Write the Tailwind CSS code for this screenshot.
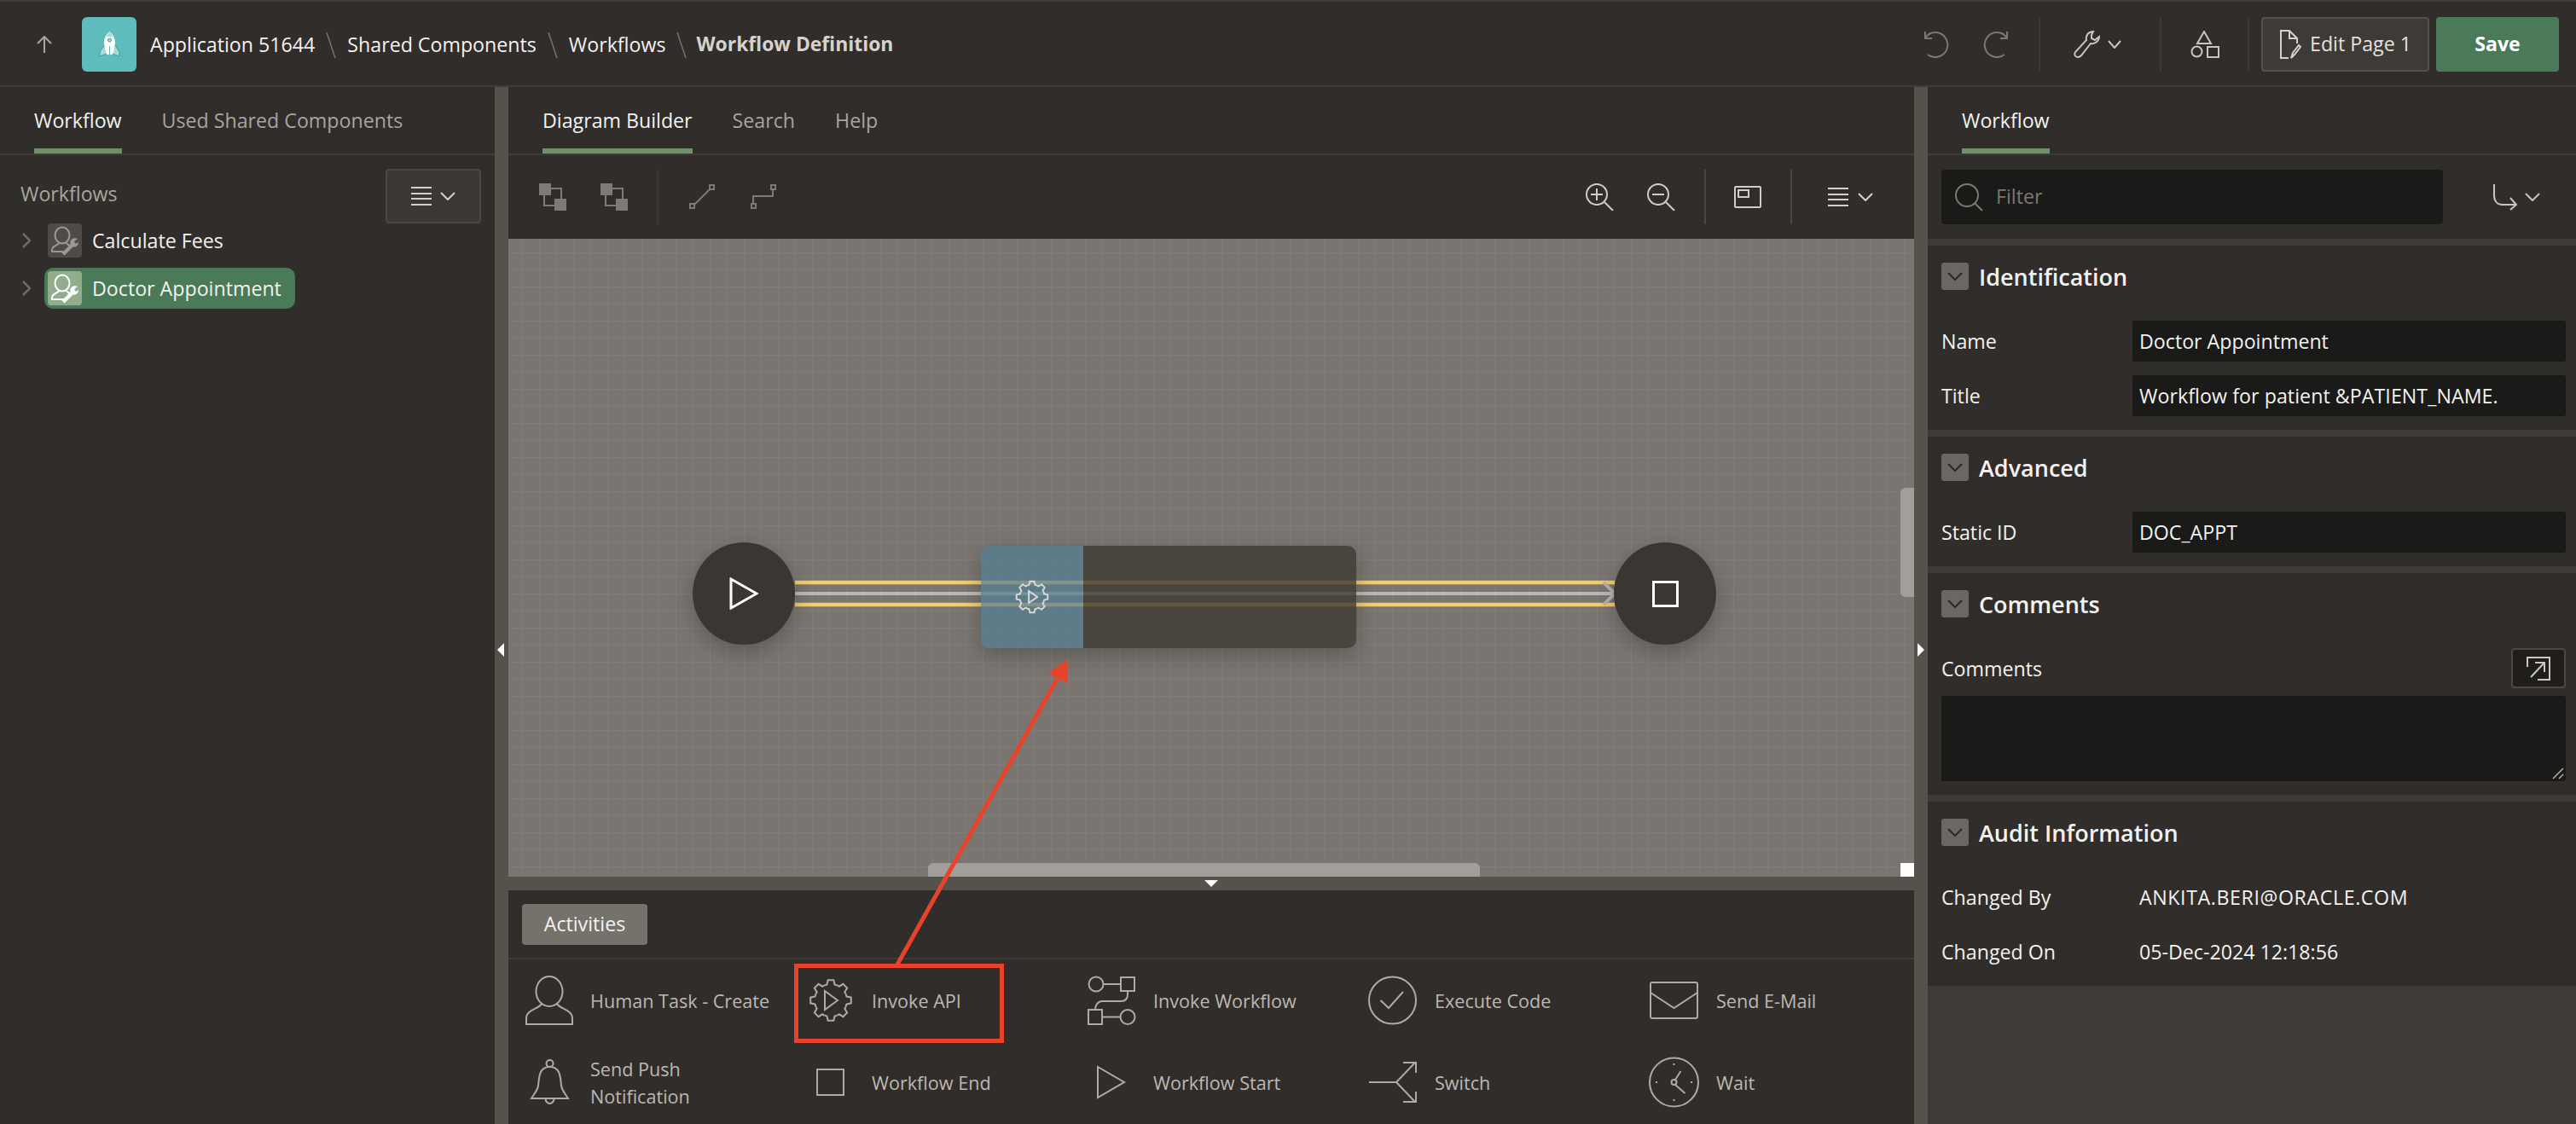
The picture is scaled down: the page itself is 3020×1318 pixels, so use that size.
<!DOCTYPE html>
<html lang="en">
<head>
  <meta charset="UTF-8" />
  <meta name="viewport" content="width=device-width, initial-scale=1" />
  <title>Workflow Definition</title>
  <script src="https://cdn.jsdelivr.net/npm/@tailwindcss/browser@4"></script>
</head>
<body class="relative w-[3020px] h-[1318px] overflow-hidden bg-[#312d2a] text-[#f3f2f0] text-[23.2px] leading-none [font-family:'Open_Sans',sans-serif]">

  <!-- top bar -->
  <header class="h-[102px] pt-[2px] border-t-2 border-b-2 border-[#3f3c38] flex items-center pl-[42px] pr-[20px] box-border">
    <svg class="w-[20px] h-[20px] text-[#a9a5a0]" viewBox="0 0 20 20" fill="none" stroke="currentColor" stroke-width="2"><path d="M10 20V1M2 9l8-8 8 8"/></svg>
    <div class="ml-[34px] w-[64px] h-[64px] rounded-[6px] bg-[#5fbcbd] flex items-center justify-center">
      <svg class="w-[25px] h-[32px]" viewBox="0 0 25 32"><path d="M6 17L1 25V30L9 27ZM19 17L24 25V30L16 27Z" fill="#a6dcd8" stroke="#3f9a9a" stroke-width="1"/><path d="M12.500 1C8 5 6 9 6 14C6 20 8 25 9 28H16C17 25 19 20 19 14C19 9 17 5 12.500 1Z" fill="#fff"/><path d="M12.500 1L8.500 7H16.500Z" fill="#a6dcd8"/><circle cx="12.500" cy="11" r="2" fill="#a6dcd8" stroke="#3f9a9a" stroke-width="1"/><path d="M12.500 18V31" stroke="#5fbcbd" stroke-width="1"/></svg>
    </div>
    <nav class="ml-[16px] pt-[1px] flex items-center gap-[13px]">
      <span>Application 51644</span>
      <svg class="w-[12px] h-[30px]" viewBox="0 0 12 30" fill="none" stroke="#77736e" stroke-width="1.500"><path d="M1 0l10 30"/></svg>
      <span>Shared Components</span>
      <svg class="w-[12px] h-[30px]" viewBox="0 0 12 30" fill="none" stroke="#77736e" stroke-width="1.500"><path d="M1 0l10 30"/></svg>
      <span>Workflows</span>
      <svg class="w-[12px] h-[30px]" viewBox="0 0 12 30" fill="none" stroke="#77736e" stroke-width="1.500"><path d="M1 0l10 30"/></svg>
      <span class="-ml-[2px] text-[22.9px] font-bold text-[#d6d3cf]">Workflow Definition</span>
    </nav>
    <div class="ml-auto flex items-center h-[64px]">
      <svg class="w-[32px] h-[32px]" viewBox="0 0 32 32" fill="none" stroke="#7c7873" stroke-width="2"><path d="M3 1v8h8M3 9C6 4 10 2 14 2a14.500 14.500 0 1 1-8 26"/></svg>
      <svg class="ml-[38px] w-[32px] h-[32px]" viewBox="0 0 32 32" fill="none" stroke="#7c7873" stroke-width="2"><path d="M29 1v8h-8M29 9C26 4 22 2 18 2a14.500 14.500 0 1 0 8 26"/></svg>
      <div class="ml-[34px] w-[2px] h-[64px] bg-[#3c3935]"></div>
      <svg class="ml-[38px] w-[32px] h-[32px]" viewBox="0 0 32 32" fill="none" stroke="#c9c6c1" stroke-width="2"><path d="M24 1c-6 0-9 5-8 10L3 25c-2 3 0 6 3 6 2 0 3-1 4-2l11-14c5 1 10-3 10-8l-5 4-4-2V5z"/></svg>
      <svg class="ml-[9px] w-[16px] h-[10px]" viewBox="0 0 16 10" fill="none" stroke="#c9c6c1" stroke-width="2"><path d="M1 1l7 8 7-8"/></svg>
      <div class="ml-[45px] w-[2px] h-[64px] bg-[#3c3935]"></div>
      <svg class="ml-[34px] w-[34px] h-[32px]" viewBox="0 0 34 32" fill="none" stroke="#c9c6c1" stroke-width="2"><path d="M16 1l8 14H8z"/><circle cx="7.500" cy="24.500" r="6"/><path d="M20 19h13v12H20z"/></svg>
      <div class="ml-[33px] w-[2px] h-[64px] bg-[#3c3935]"></div>
      <button class="ml-[14px] w-[197px] h-[64px] rounded-[4px] border-2 border-[#55514c] bg-[#3e3b37] flex items-center pl-[19px] text-[#e4e2de]">
        <svg class="w-[26px] h-[34px]" viewBox="0 0 26 34" fill="none" stroke="#d4d1cc" stroke-width="2"><path d="M11 33H2V1h10l9 9v6M12 1v9h9M14 33l2-6 7-9 2 2-7 9z"/></svg>
        <span class="ml-[10px]">Edit Page 1</span>
      </button>
      <button class="ml-[8px] w-[144px] h-[64px] rounded-[4px] bg-[#4a7a57] font-bold text-white">Save</button>
    </div>
  </header>

  <main class="flex h-[1216px]">
    <!-- left panel -->
    <section class="w-[580px]">
      <div class="h-[80px] border-b-2 border-[#3f3c38] flex gap-[47px] px-[40px]">
        <div class="h-[78px] pt-[7px] border-b-[6px] border-[#6f9068] flex items-center">Workflow</div>
        <div class="h-[78px] pt-[7px] border-b-[6px] border-transparent flex items-center text-[#a8a4a0]">Used Shared Components</div>
      </div>
      <div class="pt-[16px] pl-[24px] pr-[16px] h-[80px] flex justify-between">
        <span class="mt-[18px] text-[#a9a59f]">Workflows</span>
        <button class="w-[112px] h-[64px] rounded-[4px] border-2 border-[#4b4843] bg-[#3b3834] flex items-center justify-center gap-[10px]">
          <svg class="w-[24px] h-[22px]" viewBox="0 0 24 22" fill="none" stroke="#d4d1cc" stroke-width="2"><path d="M0 1h24M0 8h24M0 14h24M0 21h24"/></svg>
          <svg class="w-[18px] h-[10px]" viewBox="0 0 18 10" fill="none" stroke="#d4d1cc" stroke-width="2"><path d="M1 1l8 8 8-8"/></svg>
        </button>
      </div>
      <div class="-mt-[8px]">
        <div class="h-[56px] flex items-center pl-[26px]">
          <svg class="w-[10px] h-[18px]" viewBox="0 0 10 18" fill="none" stroke="#6f6b66" stroke-width="2.500"><path d="M1 1l8 8-8 8"/></svg>
          <div class="ml-[16px] h-[48px] pl-[4px] pr-[16px] flex items-center rounded-[10px]">
            <div class="w-[40px] h-[40px] rounded-[4px] bg-[#4f4c48]">
              <svg class="w-[40px] h-[40px]" viewBox="0 0 40 40" fill="none" stroke="#9b9792" stroke-width="2"><ellipse cx="17" cy="14" rx="8.500" ry="9.500"/><path d="M13 23C12 26 5 26 5 31V33H20M22 23C23 25 26 26 27 26"/><path d="M18 36L29 25" stroke-width="4.500"/><path d="M26 22C27 18 31 16 35 18L31 21L33 24L36 22C36 26 32 29 28 27Z" fill="#9b9792" stroke="none"/></svg>
            </div>
            <span class="ml-[12px] pt-[1px]">Calculate Fees</span>
          </div>
        </div>
        <div class="h-[56px] flex items-center pl-[26px]">
          <svg class="w-[10px] h-[18px]" viewBox="0 0 10 18" fill="none" stroke="#6f6b66" stroke-width="2.500"><path d="M1 1l8 8-8 8"/></svg>
          <div class="ml-[16px] h-[48px] pl-[4px] pr-[16px] flex items-center rounded-[10px] bg-[#4a7a57]">
            <div class="w-[40px] h-[40px] rounded-[4px] bg-[#92ad8c]">
              <svg class="w-[40px] h-[40px]" viewBox="0 0 40 40" fill="none" stroke="#fff" stroke-width="2"><ellipse cx="17" cy="14" rx="8.500" ry="9.500"/><path d="M13 23C12 26 5 26 5 31V33H20M22 23C23 25 26 26 27 26"/><path d="M18 36L29 25" stroke-width="4.500"/><path d="M26 22C27 18 31 16 35 18L31 21L33 24L36 22C36 26 32 29 28 27Z" fill="#fff" stroke="none"/></svg>
            </div>
            <span class="ml-[12px] pt-[1px]">Doctor Appointment</span>
          </div>
        </div>
      </div>
    </section>

    <!-- left splitter -->
    <div class="relative w-[16px] bg-[#55514b]">
      <svg class="absolute left-[3px] top-[652px] w-[8px] h-[16px]" viewBox="0 0 8 16"><path d="M8 0v16L0 8z" fill="#fff"/></svg>
    </div>

    <!-- center -->
    <section class="w-[1648px] flex flex-col">
      <div class="h-[80px] border-b-2 border-[#3f3c38] flex gap-[47px] px-[40px]">
        <div class="h-[78px] pt-[7px] border-b-[6px] border-[#6f9068] flex items-center">Diagram Builder</div>
        <div class="h-[78px] pt-[7px] border-b-[6px] border-transparent flex items-center text-[#a8a4a0]">Search</div>
        <div class="h-[78px] pt-[7px] border-b-[6px] border-transparent flex items-center text-[#a8a4a0]">Help</div>
      </div>
      <div class="h-[98px] flex items-center pl-[36px]">
        <svg class="w-[32px] h-[32px]" viewBox="0 0 32 32"><path d="M6 6h20v20H6z" fill="none" stroke="#7e7a75" stroke-width="2"/><path d="M0 0h14v14H0zM18 18h14v14H18z" fill="#7e7a75"/></svg>
        <svg class="ml-[40px] w-[32px] h-[32px]" viewBox="0 0 32 32"><path d="M14 6h12v12M18 26H6V14" fill="none" stroke="#7e7a75" stroke-width="2"/><path d="M0 0h14v14H0zM18 18h14v14H18z" fill="#7e7a75"/></svg>
        <div class="ml-[34px] w-[2px] h-[64px] bg-[#3c3935]"></div>
        <svg class="ml-[36px] w-[30px] h-[30px]" viewBox="0 0 30 30" fill="none" stroke="#7e7a75" stroke-width="2"><path d="M6 24L24 6"/><rect x="1" y="23" width="5" height="5"/><rect x="24" y="1" width="5" height="5"/></svg>
        <svg class="ml-[42px] w-[30px] h-[30px]" viewBox="0 0 30 30" fill="none" stroke="#7e7a75" stroke-width="2"><path d="M3 23V14H26V6"/><rect x="1" y="23" width="5" height="5"/><rect x="24" y="1" width="5" height="5"/></svg>
        <svg class="ml-[949px] w-[33px] h-[32px]" viewBox="0 0 33 32" fill="none" stroke="#d0cdc8" stroke-width="2"><circle cx="13" cy="13" r="12"/><path d="M22 22l10 10M13 6v14M6 13h14"/></svg>
        <svg class="ml-[39px] w-[33px] h-[32px]" viewBox="0 0 33 32" fill="none" stroke="#d0cdc8" stroke-width="2"><circle cx="13" cy="13" r="12"/><path d="M22 22l10 10M6 13h14"/></svg>
        <div class="ml-[34px] w-[2px] h-[64px] bg-[#4a4742]"></div>
        <svg class="ml-[33px] w-[32px] h-[26px]" viewBox="0 0 32 26" fill="none" stroke="#d0cdc8" stroke-width="2"><rect x="1" y="1" width="30" height="24" rx="1"/><rect x="5" y="5" width="12" height="8"/></svg>
        <div class="ml-[34px] w-[2px] h-[64px] bg-[#4a4742]"></div>
        <svg class="ml-[42px] w-[24px] h-[22px]" viewBox="0 0 24 22" fill="none" stroke="#d4d1cc" stroke-width="2"><path d="M0 1h24M0 8h24M0 14h24M0 21h24"/></svg>
        <svg class="ml-[11px] w-[18px] h-[10px]" viewBox="0 0 18 10" fill="none" stroke="#d4d1cc" stroke-width="2"><path d="M1 1l8 8 8-8"/></svg>
      </div>

      <!-- diagram canvas -->
      <div class="relative h-[748px] overflow-hidden bg-[#7a7570] bg-[image:linear-gradient(#817c77_1px,transparent_1px),linear-gradient(90deg,#817c77_1px,transparent_1px)] bg-[size:20px_20px] bg-[position:16px_16px]">
        <svg class="absolute inset-0 w-[1648px] h-[748px]" viewBox="0 0 1648 748" fill="none">
          <path d="M336 403H1297M336 429H1297" stroke="#f3cd6f" stroke-width="4.500"/>
          <path d="M336 416H1297" stroke="#bdb9b3" stroke-width="4"/>
          <path d="M1284 403l13 13-13 13" stroke="#b5b1ab" stroke-width="4"/>
        </svg>
        <div class="absolute left-[216px] top-[356px] w-[120px] h-[120px] rounded-full bg-[#3a3632] shadow-[0_8px_24px_rgba(0,0,0,0.25)] flex items-center justify-center">
          <svg class="w-[34px] h-[38px]" viewBox="0 0 34 38" fill="none" stroke="#fff" stroke-width="3"><path d="M2 2l30 17L2 36z"/></svg>
        </div>
        <div class="absolute left-[554px] top-[360px] w-[440px] h-[120px] rounded-[10px] overflow-hidden flex shadow-[0_8px_24px_rgba(0,0,0,0.25)]">
          <div class="w-[120px] bg-[#537d96]/70 flex items-center justify-center">
            <svg class="w-[40px] h-[40px]" viewBox="-26 -26 52 52" fill="none" stroke="#dcdad6" stroke-width="2.500">
              <path id="t" d="M-7.270-17.550A19 19 0 0 1-4.600-18.440L-3.340-23.770L3.340-23.770L4.600-18.440A19 19 0 0 1 7.270-17.550"/>
              <use href="#t" transform="rotate(45)"/><use href="#t" transform="rotate(90)"/><use href="#t" transform="rotate(135)"/><use href="#t" transform="rotate(180)"/><use href="#t" transform="rotate(225)"/><use href="#t" transform="rotate(270)"/><use href="#t" transform="rotate(315)"/>
              <path d="M-5-9L8 0L-5 9z"/>
            </svg>
          </div>
          <div class="flex-1 bg-[#3c3933]/80"></div>
        </div>
        <div class="absolute left-[1296px] top-[356px] w-[120px] h-[120px] rounded-full bg-[#3a3632] shadow-[0_8px_24px_rgba(0,0,0,0.25)] flex items-center justify-center">
          <div class="w-[31px] h-[31px] border-[3px] border-white"></div>
        </div>
        <div class="absolute left-[1632px] top-[292px] w-[16px] h-[128px] rounded-l-[6px] bg-[#a29e99]"></div>
        <div class="absolute left-[492px] top-[732px] w-[647px] h-[16px] rounded-t-[6px] bg-[#a29e99]"></div>
        <div class="absolute right-0 bottom-0 w-[16px] h-[16px] bg-white"></div>
      </div>

      <div class="relative h-[16px] bg-[#55514b]">
        <svg class="absolute left-[816px] top-[4px] w-[16px] h-[8px]" viewBox="0 0 16 8"><path d="M0 0h16L8 8z" fill="#fff"/></svg>
      </div>

      <!-- activities palette -->
      <div class="flex-1 text-[#bcb8b2] text-[21.6px]">
        <div class="h-[81px] border-b-2 border-[#3f3c38] pl-[16px] pt-[16px]">
          <div class="w-[147px] h-[48px] rounded-[4px] bg-[#75716b] text-[#f3f2f0] text-[23.2px] flex items-center justify-center">Activities</div>
        </div>
        <div class="ml-[10px] grid grid-cols-[repeat(5,330px)] auto-rows-[96px]">
          <div class="flex items-center pl-[6px] gap-[16px]">
            <svg class="w-[64px] h-[64px]" viewBox="0 0 64 64" fill="none" stroke="#aeaaa4" stroke-width="2"><ellipse cx="32" cy="21.500" rx="15.500" ry="17.500"/><path d="M23 36C20 42 5 43 5 53V60H59V53C59 43 44 42 41 36"/></svg>
            <span class="pt-[1px]">Human Task - Create</span>
          </div>
          <div class="flex items-center pl-[6px] gap-[16px]">
            <svg class="w-[64px] h-[64px]" viewBox="-32 -32 64 64" fill="none" stroke="#aeaaa4" stroke-width="2">
              <use href="#t"/><use href="#t" transform="rotate(45)"/><use href="#t" transform="rotate(90)"/><use href="#t" transform="rotate(135)"/><use href="#t" transform="rotate(180)"/><use href="#t" transform="rotate(225)"/><use href="#t" transform="rotate(270)"/><use href="#t" transform="rotate(315)"/>
              <path d="M-7-11L8 0L-7 11z"/>
            </svg>
            <span class="pt-[1px]">Invoke API</span>
          </div>
          <div class="flex items-center pl-[6px] gap-[16px]">
            <svg class="w-[64px] h-[64px]" viewBox="0 0 64 64" fill="none" stroke="#aeaaa4" stroke-width="2"><circle cx="13" cy="13" r="8.500"/><path d="M22 13H42"/><rect x="42" y="5" width="16" height="16"/><path d="M50 21V25C50 30 47 33 42 33H20C15 33 12 38 12 43"/><rect x="4" y="43" width="16" height="17"/><path d="M20 51.500H41"/><circle cx="50" cy="51.500" r="8.500"/></svg>
            <span class="pt-[1px]">Invoke Workflow</span>
          </div>
          <div class="flex items-center pl-[6px] gap-[16px]">
            <svg class="w-[64px] h-[64px]" viewBox="0 0 64 64" fill="none" stroke="#aeaaa4" stroke-width="2"><circle cx="30.500" cy="32" r="27.500"/><path d="M16.500 32L26 41L43 22"/></svg>
            <span class="pt-[1px]">Execute Code</span>
          </div>
          <div class="flex items-center pl-[6px] gap-[16px]">
            <svg class="w-[64px] h-[64px]" viewBox="0 0 64 64" fill="none" stroke="#aeaaa4" stroke-width="2"><rect x="3" y="11" width="55" height="42" rx="2"/><path d="M3 23L30.500 41L58 23"/></svg>
            <span class="pt-[1px]">Send E-Mail</span>
          </div>

          <div class="flex items-center pl-[6px] gap-[16px]">
            <svg class="w-[64px] h-[64px]" viewBox="0 0 64 64" fill="none" stroke="#aeaaa4" stroke-width="2"><circle cx="32.500" cy="10" r="4"/><path d="M32.500 14C20 14 20 26 19 36C18 42 14 46 11 51H54C51 46 47 42 46 36C45 26 45 14 32.500 14Z"/><path d="M27.500 51a5 6 0 0 0 10 0"/></svg>
            <span class="leading-[32px] pt-[1px]">Send Push<br>Notification</span>
          </div>
          <div class="flex items-center pl-[6px] gap-[16px]">
            <svg class="w-[64px] h-[64px]" viewBox="0 0 64 64" fill="none" stroke="#aeaaa4" stroke-width="2"><rect x="16" y="17" width="31" height="30"/></svg>
            <span class="pt-[1px]">Workflow End</span>
          </div>
          <div class="flex items-center pl-[6px] gap-[16px]">
            <svg class="w-[64px] h-[64px]" viewBox="0 0 64 64" fill="none" stroke="#aeaaa4" stroke-width="2"><path d="M15 14L46 32L15 50Z"/></svg>
            <span class="pt-[1px]">Workflow Start</span>
          </div>
          <div class="flex items-center pl-[6px] gap-[16px]">
            <svg class="w-[64px] h-[64px]" viewBox="0 0 64 64" fill="none" stroke="#aeaaa4" stroke-width="2"><path d="M3 32H35L57 9M43 9H58V21M35 32L57 55M43 55H58V43"/></svg>
            <span class="pt-[1px]">Switch</span>
          </div>
          <div class="flex items-center pl-[6px] gap-[16px]">
            <svg class="w-[64px] h-[64px]" viewBox="0 0 64 64" fill="none" stroke="#aeaaa4" stroke-width="2"><circle cx="30.500" cy="32" r="28.500"/><circle cx="30.500" cy="32" r="3"/><path d="M32 29L38.500 19M32 35L43.500 45M30.500 10v2M30.500 52v2M9 32h2M50 32h2"/></svg>
            <span class="pt-[1px]">Wait</span>
          </div>
        </div>
      </div>
    </section>

    <!-- right splitter -->
    <div class="relative w-[16px] bg-[#55514b]">
      <svg class="absolute left-[4px] top-[652px] w-[8px] h-[16px]" viewBox="0 0 8 16"><path d="M0 0v16l8-8z" fill="#fff"/></svg>
    </div>

    <!-- right panel -->
    <section class="w-[760px] bg-[#3e3b37] flex flex-col">
      <div class="bg-[#312d2a]">
        <div class="h-[80px] border-b-2 border-[#3f3c38] px-[40px]">
          <div class="w-fit h-[78px] pt-[7px] border-b-[6px] border-[#6f9068] flex items-center">Workflow</div>
        </div>
        <div class="h-[98px] flex items-center pl-[16px]">
          <div class="w-[588px] h-[64px] rounded-[4px] bg-[#1a1a18] flex items-center pl-[16px]">
            <svg class="w-[33px] h-[33px]" viewBox="0 0 33 33" fill="none" stroke="#7c7873" stroke-width="2"><circle cx="14" cy="14" r="13"/><path d="M23 23l9 9"/></svg>
            <span class="ml-[15px] text-[#7c7873]">Filter</span>
          </div>
          <svg class="ml-[58px] w-[30px] h-[32px]" viewBox="0 0 30 32" fill="none" stroke="#c9c6c1" stroke-width="2"><path d="M2 1V14C2 21 6 25 12 25H28M21 17l7 8-7 6"/></svg>
          <svg class="ml-[8px] w-[18px] h-[10px]" viewBox="0 0 18 10" fill="none" stroke="#c9c6c1" stroke-width="2"><path d="M1 1l8 8 8-8"/></svg>
        </div>
      </div>

      <div class="mt-[8px] bg-[#312d2a] px-[16px] pr-[12px] pt-[20px] pb-[16px]">
        <div class="flex items-center h-[32px] gap-[12px]">
          <div class="w-[32px] h-[32px] rounded-[3px] bg-[#6b6763] flex items-center justify-center"><svg class="w-[18px] h-[10px]" viewBox="0 0 18 10" fill="none" stroke="#2b2925" stroke-width="2"><path d="M1 1l8 8 8-8"/></svg></div>
          <h2 class="text-[27px] font-semibold">Identification</h2>
        </div>
        <div class="mt-[36px] flex items-center"><span class="w-[224px] pt-[1px]">Name</span><div class="flex-1 h-[48px] pt-[1px] rounded-[3px] bg-[#1a1a18] flex items-center pl-[8px]">Doctor Appointment</div></div>
        <div class="mt-[16px] flex items-center"><span class="w-[224px] pt-[1px]">Title</span><div class="flex-1 h-[48px] pt-[1px] rounded-[3px] bg-[#1a1a18] flex items-center pl-[8px] tracking-[0.06px]">Workflow for patient &amp;PATIENT_NAME.</div></div>
      </div>

      <div class="mt-[8px] bg-[#312d2a] px-[16px] pr-[12px] pt-[20px] pb-[16px]">
        <div class="flex items-center h-[32px] gap-[12px]">
          <div class="w-[32px] h-[32px] rounded-[3px] bg-[#6b6763] flex items-center justify-center"><svg class="w-[18px] h-[10px]" viewBox="0 0 18 10" fill="none" stroke="#2b2925" stroke-width="2"><path d="M1 1l8 8 8-8"/></svg></div>
          <h2 class="text-[27px] font-semibold">Advanced</h2>
        </div>
        <div class="mt-[36px] flex items-center"><span class="w-[224px] pt-[1px]">Static ID</span><div class="flex-1 h-[48px] pt-[1px] rounded-[3px] bg-[#1a1a18] flex items-center pl-[8px]">DOC_APPT</div></div>
      </div>

      <div class="mt-[8px] bg-[#312d2a] px-[16px] pr-[12px] pt-[20px] pb-[16px]">
        <div class="flex items-center h-[32px] gap-[12px]">
          <div class="w-[32px] h-[32px] rounded-[3px] bg-[#6b6763] flex items-center justify-center"><svg class="w-[18px] h-[10px]" viewBox="0 0 18 10" fill="none" stroke="#2b2925" stroke-width="2"><path d="M1 1l8 8 8-8"/></svg></div>
          <h2 class="text-[27px] font-semibold">Comments</h2>
        </div>
        <div class="mt-[36px] h-[47px] flex items-center justify-between">
          <span class="pt-[2px]">Comments</span>
          <button class="w-[64px] h-[47px] rounded-[4px] border-2 border-[#4b4843] bg-[#1f1e1c] flex items-center justify-center">
            <svg class="w-[30px] h-[28px]" viewBox="0 0 30 28" fill="none" stroke="#c9c6c1" stroke-width="2"><path d="M2 12V1H28V27H14M6 24L22 7M11 7H22V18"/></svg>
          </button>
        </div>
        <div class="relative mt-[9px] h-[100px] rounded-[3px] bg-[#1a1a18]">
          <svg class="absolute right-[2px] bottom-[2px] w-[14px] h-[14px]" viewBox="0 0 14 14" fill="none" stroke="#b5b1ab" stroke-width="1.500"><path d="M1 13L13 1M8 13L13 8"/></svg>
        </div>
      </div>

      <div class="mt-[8px] bg-[#312d2a] px-[16px] pr-[12px] pt-[20px] pb-[16px]">
        <div class="flex items-center h-[32px] gap-[12px]">
          <div class="w-[32px] h-[32px] rounded-[3px] bg-[#6b6763] flex items-center justify-center"><svg class="w-[18px] h-[10px]" viewBox="0 0 18 10" fill="none" stroke="#2b2925" stroke-width="2"><path d="M1 1l8 8 8-8"/></svg></div>
          <h2 class="text-[27px] font-semibold">Audit Information</h2>
        </div>
        <div class="mt-[36px] h-[48px] pt-[1px] flex items-center"><span class="w-[232px]">Changed By</span><span class="tracking-[0.6px]">ANKITA.BERI@ORACLE.COM</span></div>
        <div class="mt-[16px] h-[48px] pt-[1px] flex items-center"><span class="w-[232px]">Changed On</span><span>05-Dec-2024 12:18:56</span></div>
      </div>
    </section>
  </main>

  <!-- red annotation -->
  <svg class="absolute inset-0 w-[3020px] h-[1318px] pointer-events-none" viewBox="0 0 3020 1318" fill="none">
    <rect x="933.500" y="1132.500" width="241" height="88" stroke="#e8432a" stroke-width="5"/>
    <path d="M1052 1131L1241 793" stroke="#e8432a" stroke-width="5"/>
    <path d="M1252 773L1229 789L1251 801Z" fill="#e8432a"/>
  </svg>
</body>
</html>
